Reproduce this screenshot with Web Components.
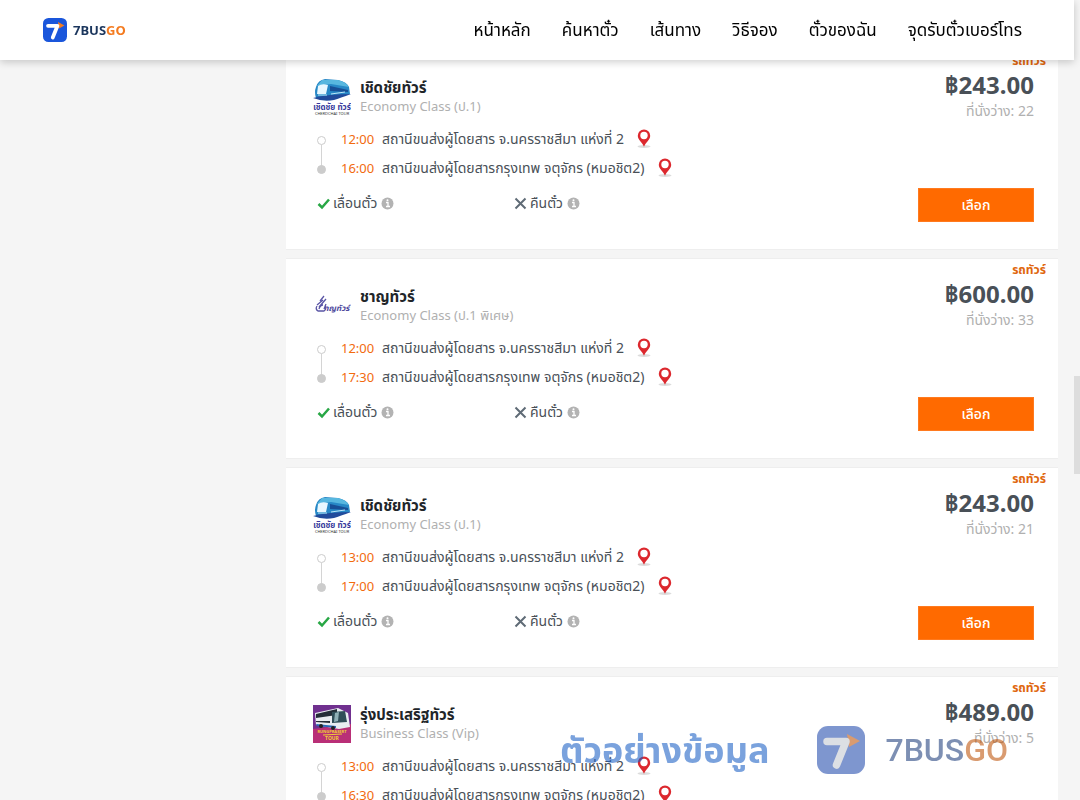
<!DOCTYPE html>
<html lang="th">
<head>
<meta charset="utf-8">
<meta name="viewport" content="width=device-width, initial-scale=1">
<title>7BUSGO</title>
<style>
  html, body { margin: 0; height: 100%; }
  body { background: #f5f5f5; overflow: hidden; font: 14px/20px "Noto Sans", "Noto Sans Thai", sans-serif; color: #495057; }
</style>
</head>
<body>
<site-header>
  <nav-link href="#home">หน้าหลัก</nav-link>
  <nav-link href="#search">ค้นหาตั๋ว</nav-link>
  <nav-link href="#routes">เส้นทาง</nav-link>
  <nav-link href="#how">วิธีจอง</nav-link>
  <nav-link href="#tickets">ตั๋วของฉัน</nav-link>
  <nav-link href="#pickup">จุดรับตั๋วเบอร์โทร</nav-link>
</site-header>
<trip-list>
  <trip-card logo="cherdchai" name="เชิดชัยทัวร์" kind="Economy Class (ป.1)" price="฿243.00" seats="22" depart="12:00" arrive="16:00"></trip-card>
  <trip-card logo="chan" name="ชาญทัวร์" kind="Economy Class (ป.1 พิเศษ)" price="฿600.00" seats="33" depart="12:00" arrive="17:30"></trip-card>
  <trip-card logo="cherdchai" name="เชิดชัยทัวร์" kind="Economy Class (ป.1)" price="฿243.00" seats="21" depart="13:00" arrive="17:00"></trip-card>
  <trip-card logo="rung" name="รุ่งประเสริฐทัวร์" kind="Business Class (Vip)" price="฿489.00" seats="5" depart="13:00" arrive="16:30"></trip-card>
</trip-list>
<sample-mark>ตัวอย่างข้อมูล</sample-mark>
<scroll-thumb></scroll-thumb>

<script>
const define = (name, html) => customElements.define(name, class extends HTMLElement {
  connectedCallback() {
    if (this.shadowRoot) return;
    const root = this.attachShadow({ mode: 'open' });
    const t = document.createElement('template');
    t.innerHTML = typeof html === 'function' ? html(this) : html;
    root.append(t.content.cloneNode(true));
  }
});

define('brand-mark', `
<style>
:host{display:block;width:24px;height:24px}
svg{display:block;width:100%;height:100%}
.tile{fill:var(--tile,#1a56db)} .tip{fill:var(--go,#f47b20)} .seven{stroke:var(--seven,#fff)}
</style>
<svg viewBox="0 0 48 48" aria-hidden="true">
  <rect class="tile" width="48" height="48" rx="11"/>
  <path class="tip" d="M30 8L43 15L32 21z"/>
  <path class="seven" d="M10 15.500H29L19.500 39" fill="none" stroke-width="7.500" stroke-linecap="round" stroke-linejoin="round"/>
</svg>`);

define('brand-name', `
<style>:host{display:block;color:var(--bus,#1b365d);font-weight:700} .go{color:var(--go,#f47b20)}</style>
<span>7BUS</span><span class="go">GO</span>`);

define('nav-link', el => `
<style>:host{display:block} a{color:#000;text-decoration:none;font-size:17px;line-height:24px;white-space:nowrap}</style>
<a href="${el.getAttribute('href')}"><slot></slot></a>`);

define('site-header', `
<style>
:host{display:flex;align-items:center;justify-content:space-between;position:fixed;z-index:5;top:0;left:0;right:6px;height:60px;padding:0 52px 0 43px;box-sizing:border-box;background:#fff;box-shadow:0 2px 8px rgba(0,0,0,.2)}
a{display:flex;align-items:center;gap:6px;text-decoration:none}
brand-name{font-size:13px;line-height:20px}
nav{display:flex;gap:31px}
</style>
<a href="#home" aria-label="7BUSGO"><brand-mark></brand-mark><brand-name></brand-name></a>
<nav><slot></slot></nav>`);

define('trip-list', `
<style>:host{display:grid;gap:8px;padding:49px 22px 8px 286px}</style><slot></slot>`);

const logos = {
  cherdchai: `<svg viewBox="0 0 38 38">
    <path d="M3 9Q5 2 12 1L25 2Q34 4 36 9L37 16L20 20H3Q1 14 3 9z" fill="#2788c6"/>
    <path d="M9 2L25 2Q33 4 36 9L18 6L4 8z" fill="#57b7df"/>
    <path d="M5 8Q9 5 15 7L13 16H4z" fill="#e9f8ff"/>
    <path d="M17 8L35 12V14L17 13z" fill="#174f96"/>
    <path d="M0 20Q15 16 38 16Q27 20 21 22Q10 24 0 20z" fill="#214b9b"/>
    <path d="M5 17h9M18 16l14-2" stroke="#bce6f7"/>
    <text x="19" y="32" text-anchor="middle" font-size="8" font-weight="700" fill="#35399b">เชิดชัย ทัวร์</text>
    <text x="19" y="37" text-anchor="middle" font-size="4" fill="#333">CHERDCHAI TOUR</text></svg>`,
  chan: `<svg viewBox="0 0 38 38">
    <g fill="none" stroke="#5a55a5"><path d="M4 19q-2 3 1 5h6q3-2 1-6M6 22q1-4 4-4M4 18l6-5M6 20l7-8M7 14l4-5M11 22l2-5" stroke-width="1.300"/></g>
    <text x="12" y="24" font-size="8" font-weight="700" font-style="italic" fill="#4d489c">าญทัวร์</text></svg>`,
  rung: `<svg viewBox="0 0 38 38">
    <rect width="38" height="38" fill="#70308f"/><path d="M0 24L38 19V38H0z" fill="#b92f77"/>
    <path d="M2 8L25 3L35 8L37 22L26 24L3 20z" fill="#e9edf1"/>
    <path d="M3 9L24 4V10L3 13zM3 16L17 16V18L3 17z" fill="#242d37"/>
    <path d="M19 7L32 6L34 17L19 18z" fill="#304e58"/><path d="M22 8L26 7L25 16L21 17z" fill="#8fb0b6"/>
    <path d="M3 19L23 21V23L4 21z" fill="#2868b5"/><circle cx="8" cy="21" r="2" fill="#222"/><circle cx="20" cy="23" r="2" fill="#222"/>
    <path d="M10 30L29 29" stroke="#f1cf32"/>
    <text x="19" y="28" text-anchor="middle" font-size="4" font-weight="700" fill="#f1cf32">RUNGPRASERT</text>
    <text x="19" y="35" text-anchor="middle" font-size="5" font-weight="700" fill="#f1cf32">TOUR</text></svg>`
};
define('operator-logo', el => `
<style>:host{display:block;width:38px;height:38px} svg{display:block;width:100%;height:100%}</style>${logos[el.getAttribute('name')]}`);

define('stop-row', el => `
<style>
:host{display:flex;align-items:center;height:29px;color:#495057}
i{position:relative;width:9px;height:9px;border:1px solid #ccc;border-radius:50%;box-sizing:border-box;margin:3px 15px 0 4px;background:#fff}
:host([start]) i::after{content:"";position:absolute;left:3px;top:8px;width:1px;height:21px;background:#d4d4d4}
:host([end]) i{background:#ccc}
time{color:#f26b0f;width:41px;font-size:13px}
span{white-space:nowrap}
a{display:block;margin-left:13px} svg{display:block;width:14px;height:20px}
</style>
<i></i><time>${el.getAttribute('time')}</time><span><slot></slot></span>
<a href="#map" aria-label="แผนที่"><svg viewBox="0 0 14 20"><ellipse cx="7" cy="17.500" rx="6.500" ry="1.500" fill="#dcdcdc"/><path d="M7 0.500a6.200 6.200 0 0 0-6.200 6.200c0 4 4.200 6.300 6.200 11 2-4.700 6.200-7 6.200-11a6.200 6.200 0 0 0-6.200-6.200z" fill="#dc282e"/><circle cx="7" cy="6.500" r="3.700" fill="#fff"/></svg></a>`);

define('policy-item', el => `
<style>
:host{display:flex;align-items:center;gap:3px;color:#495057}
svg{display:block;width:13px;height:13px} .info{margin-left:1px;margin-top:1px}
</style>
${el.hasAttribute('allowed')
  ? '<svg viewBox="0 0 13 13"><path d="M1.500 7L5 10.500L12 2.500" fill="none" stroke="#28a745" stroke-width="2.500"/></svg>'
  : '<svg viewBox="0 0 13 13"><path d="M1.500 1.500L11.500 11.500M11.500 1.500L1.500 11.500" stroke="#5f6b76" stroke-width="2"/></svg>'}
<span><slot></slot></span>
<svg class="info" viewBox="0 0 13 13"><circle cx="6.500" cy="6.500" r="6" fill="#b3b3b3"/><path d="M5 5.500h2v4M5 9.500h4" fill="none" stroke="#fff" stroke-width="1.300"/><circle cx="6.500" cy="3.300" r="1" fill="#fff"/></svg>`);

define('trip-card', el => {
  const a = n => el.getAttribute(n);
  return `
<style>
:host{display:flex;justify-content:space-between;min-height:201px;box-sizing:border-box;padding:0 24px 0 27px;background:#fff;border:1px solid #eee;border-width:1px 0}
.trip{padding-top:28px}
header{display:flex;gap:9px;height:46px}
h2{margin:0;font-size:15px;line-height:19px;color:#212529;font-weight:700}
p{margin:0;line-height:19px;color:#b0b0b0}
header p{font-size:13px}
.policies{display:grid;grid-template-columns:197px auto;height:30px;margin-top:6px;padding-left:4px}
.fare{display:flex;flex-direction:column;align-items:flex-end;min-width:116px}
.type{height:15px;overflow:hidden;font-size:12px;line-height:22px;font-weight:700;color:#e0660d;margin-right:-12px}
.price{font-size:24px;line-height:32px;font-weight:700;color:#495057;margin-top:4px}
button{width:116px;height:34px;margin-top:68px;border:1px solid #ff7a1f;background:#ff6a00;color:#fff;font:inherit;font-weight:500;padding:0}
</style>
<div class="trip">
  <header><operator-logo name="${a('logo')}"></operator-logo><div><h2>${a('name')}</h2><p>${a('kind')}</p></div></header>
  <stop-row start time="${a('depart')}">สถานีขนส่งผู้โดยสาร จ.นครราชสีมา แห่งที่ 2</stop-row>
  <stop-row end time="${a('arrive')}">สถานีขนส่งผู้โดยสารกรุงเทพ จตุจักร (หมอชิต2)</stop-row>
  <div class="policies"><policy-item allowed>เลื่อนตั๋ว</policy-item><policy-item>คืนตั๋ว</policy-item></div>
</div>
<div class="fare">
  <div class="type">รถทัวร์</div><div class="price">${a('price')}</div><p>ที่นั่งว่าง: ${a('seats')}</p>
  <button type="button">เลือก</button>
</div>`;
});

define('sample-mark', `
<style>
:host{display:flex;align-items:center;position:fixed;z-index:3;right:72px;bottom:20px;height:60px;opacity:.58;pointer-events:none;--tile:#224aac;--seven:#c3c8d0;--go:#be530a;--bus:#1f3f7c}
.label{font-size:36px;line-height:48px;font-weight:700;color:#1b5fc4;margin-right:48px}
brand-mark{width:48px;height:48px;margin-right:20px}
brand-name{font:500 32px/48px Roboto,sans-serif}
</style>
<span class="label"><slot></slot></span><brand-mark></brand-mark><brand-name></brand-name>`);

define('scroll-thumb', `
<style>:host{display:block;position:fixed;z-index:6;right:0;top:47%;width:6px;height:98px;background:#ddd}</style>`);
</script>
</body>
</html>
